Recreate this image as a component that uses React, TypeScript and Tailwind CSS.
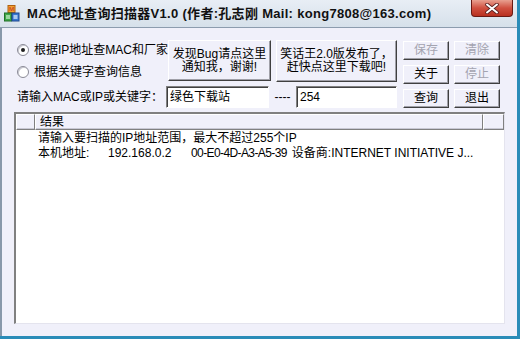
import React from "react";

const font = {
  fontFamily: '"Liberation Sans", "Noto Sans CJK SC", sans-serif',
};

function Btn({
  children,
  disabled,
  className = "",
}: {
  children: React.ReactNode;
  disabled?: boolean;
  className?: string;
}) {
  return (
    <div
      className={[
        "flex flex-col items-center justify-center bg-[#f0f0fa] border-t border-l border-t-white border-l-white border-b border-r border-b-[#404040] border-r-[#404040] shadow-[inset_-1px_-1px_0_#a0a0a8] text-[12px] leading-[13px] text-center",
        disabled ? "text-[#a4a4b0]" : "text-black",
        className,
      ].join(" ")}
    >
      {children}
    </div>
  );
}

function Input({ value, className = "" }: { value: string; className?: string }) {
  return (
    <div
      className={[
        "bg-white border-t border-l border-t-[#808080] border-l-[#808080] border-b border-r border-b-white border-r-white shadow-[inset_1px_1px_0_#404040] px-[3px] pt-[3px] text-[12px] leading-[14px] text-black",
        className,
      ].join(" ")}
    >
      {value}
    </div>
  );
}

function Radio({ checked, label }: { checked?: boolean; label: string }) {
  return (
    <div className="flex items-center h-[16px]">
      <span className="w-[12px] h-[12px] rounded-full bg-white border border-[#8a8a96] flex items-center justify-center shadow-[inset_1px_1px_0_#c8c8d0]">
        {checked && <span className="w-[4px] h-[4px] rounded-full bg-[#202020]" />}
      </span>
      <span className="ml-[5px] text-[12px] leading-[14px] text-black">{label}</span>
    </div>
  );
}

function AppIcon() {
  return (
    <svg width="16" height="17" viewBox="0 0 16 17">
      <rect x="4" y="0.5" width="7" height="7" fill="#f0a030" stroke="#b06010" />
      <text x="7.5" y="6.3" fontSize="6" textAnchor="middle" fill="#c02020" fontFamily="Liberation Sans">M</text>
      <rect x="0.5" y="8" width="7" height="8" fill="#40a848" stroke="#207028" />
      <rect x="8" y="8" width="7" height="8" fill="#3878d0" stroke="#1c4890" />
      <rect x="2" y="10" width="4" height="4" fill="#9ad89e" />
      <rect x="9.5" y="10" width="4" height="4" fill="#a8c8f0" />
    </svg>
  );
}

function HeaderCell({ children, className = "" }: { children?: React.ReactNode; className?: string }) {
  return (
    <div
      className={[
        "h-full bg-[#f0f0fa] border-t border-l border-t-white border-l-white border-b border-r border-b-[#808080] border-r-[#808080] shadow-[inset_0_-1px_0_#c8c8d4] text-[12px] leading-[14px] text-black pl-[4px]",
        className,
      ].join(" ")}
    >
      {children}
    </div>
  );
}

export default function App() {
  return (
    <div
      className="w-[520px] h-[339px] flex flex-col bg-[#f0f0fa] border-r-[3px] border-b-[3px] border-r-[#2a8cb8] border-b-[#2a8cb8] overflow-hidden"
      style={font}
    >
      {/* title bar */}
      <div className="h-[28px] flex items-start bg-[linear-gradient(180deg,#e8eef5,#d6e0ea)] border-b border-[#8c9cae] relative">
        <div className="ml-[4px] mt-[5px]">
          <AppIcon />
        </div>
        <div className="ml-[7px] mt-[6px] text-[13px] leading-[15px] font-bold text-[#111] tracking-[0.3px]">
          MAC地址查询扫描器V1.0 (作者:孔志刚 Mail: kong7808@163.com)
        </div>
        <div className="absolute left-[471px] top-0 w-[42px] h-[17px] rounded-b-[4px] border border-t-0 border-[#6a1a14] bg-[linear-gradient(180deg,#e8a090,#d05040_50%,#b83020)] flex items-center justify-center">
          <svg width="14" height="11" viewBox="0 0 14 11">
            <path d="M2 1.5 L12 9.5 M12 1.5 L2 9.5" stroke="#5a2020" strokeWidth="3.6" strokeLinecap="round" />
            <path d="M2 1.5 L12 9.5 M12 1.5 L2 9.5" stroke="#fff" strokeWidth="2" strokeLinecap="round" />
          </svg>
        </div>
      </div>

      {/* client */}
      <div className="flex-1 flex flex-col border-l-2 border-l-[#8898aa]">
        <div className="flex mt-[12px] ml-[15px]">
          <div className="flex flex-col">
            <div className="flex h-[42px]">
              <div className="w-[151px] flex flex-col pt-[2px] gap-[6px]">
                <Radio checked label="根据IP地址查MAC和厂家" />
                <Radio label="根据关键字查询信息" />
              </div>
              <Btn className="w-[103px] h-[41px]">
                <span>发现Bug请点这里</span>
                <span>通知我，谢谢!</span>
              </Btn>
              <Btn className="w-[121px] h-[42px] ml-[5px]">
                <span>笑话王2.0版发布了，</span>
                <span>赶快点这里下载吧!</span>
              </Btn>
            </div>
            <div className="flex h-[22px] mt-[4px] items-center">
              <div className="w-[149px] text-[12px] leading-[14px] text-black">请输入MAC或IP或关键字：</div>
              <Input value="绿色下载站" className="w-[103px] h-[22px]" />
              <div className="w-[27px] text-[12px] leading-[14px] text-center text-black">----</div>
              <Input value="254" className="w-[101px] h-[22px]" />
            </div>
          </div>
          <div className="ml-[6px] mt-[1px] grid grid-cols-[46px_46px] auto-rows-[19px] gap-[5px]">
            <Btn disabled>保存</Btn>
            <Btn disabled>清除</Btn>
            <Btn>关于</Btn>
            <Btn disabled>停止</Btn>
            <Btn>查询</Btn>
            <Btn>退出</Btn>
          </div>
        </div>

        {/* list view */}
        <div className="ml-[12px] mt-[4px] w-[491px] h-[212px] bg-white border-t-2 border-l-2 border-t-[#808080] border-l-[#808080] border-b border-r border-b-[#e4e4ee] border-r-[#e4e4ee] flex flex-col">
          <div className="h-[16px] flex">
            <HeaderCell className="w-[19px]" />
            <HeaderCell className="w-[448px]">结果</HeaderCell>
            <HeaderCell className="flex-1" />
          </div>
          <div className="pl-[22px] pt-[1px] text-[12px] leading-[15px] text-black">
            <div className="h-[15px] whitespace-nowrap">请输入要扫描的IP地址范围，最大不超过255个IP</div>
            <div className="h-[15px] flex whitespace-nowrap">
              <span className="w-[70px]">本机地址:</span>
              <span className="w-[83px]">192.168.0.2</span>
              <span className="tracking-[-0.6px] mr-[5px]">00-E0-4D-A3-A5-39</span>
              <span>设备商:INTERNET INITIATIVE J...</span>
            </div>
          </div>
        </div>
      </div>
    </div>
  );
}
